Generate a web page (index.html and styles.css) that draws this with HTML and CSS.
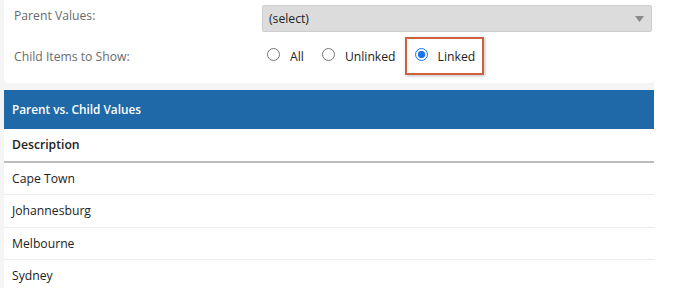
FILE: index.html
```html
<!DOCTYPE html>
<html>
<head>
<meta charset="utf-8">
<link rel="stylesheet" href="styles.css">
</head>
<body>
<div class="page">
  <div class="form">
    <div class="form-row row-select">
      <div class="label">Parent Values:</div>
      <div class="select">
        <span class="select-text">(select)</span>
        <svg class="caret" width="9" height="6" viewBox="0 0 9 6"><path d="M0 0H9L4.5 6Z" fill="#8a8a8a"/></svg>
      </div>
    </div>
    <div class="form-row row-radios">
      <div class="label">Child Items to Show:</div>
      <div class="radios">
        <label class="radio"><span class="circle"></span><span class="rtext">All</span></label>
        <label class="radio"><span class="circle"></span><span class="rtext">Unlinked</span></label>
        <label class="radio highlight"><span class="circle checked"></span><span class="rtext">Linked</span></label>
      </div>
    </div>
  </div>
  <div class="grid">
    <div class="grid-title">Parent vs. Child Values</div>
    <div class="grid-head">Description</div>
    <div class="grid-row">Cape Town</div>
    <div class="grid-row">Johannesburg</div>
    <div class="grid-row">Melbourne</div>
    <div class="grid-row">Sydney</div>
  </div>
</div>
</body>
</html>
```

FILE: styles.css
```css
html, body {
  margin: 0;
  padding: 0;
  background: #ffffff;
  font-family: "Open Sans", "Noto Sans", sans-serif;
  font-size: 12.2px;
  color: #333;
}
.page {
  width: 650px;
  padding-left: 4px;
  background: #f5f5f5;
  height: 288px;
  overflow: hidden;
}
.form {
  background: #fff;
  height: 83px;
  border-radius: 0 0 4px 4px;
  padding-left: 10px;
  padding-right: 2px;
  box-sizing: border-box;
  padding-top: 5px;
}
.form-row {
  display: flex;
  align-items: center;
}
.label {
  width: 248px;
  color: #6b6b6b;
  flex: none;
}
.row-select .label {
  align-self: flex-start;
  padding-top: 2px;
}
.select {
  flex: 1;
  height: 27px;
  box-sizing: border-box;
  background: #dcdcdc;
  border: 1px solid #cdcdcd;
  border-radius: 2px;
  display: flex;
  align-items: center;
  justify-content: space-between;
  padding: 0 7px 0 6px;
  color: #222;
}
.caret { margin-top: 1px; }
.row-radios {
  margin-top: 5px;
  height: 38px;
}
.radios {
  display: flex;
  align-items: center;
  height: 38px;
}
.radio {
  display: flex;
  align-items: center;
  color: #222;
}
.radio:first-child { margin-left: 5px; }
.radio + .radio { margin-left: 18px; }
.circle {
  width: 13px;
  height: 13px;
  border: 1px solid #767676;
  border-radius: 50%;
  box-sizing: border-box;
  margin-right: 10px;
  margin-top: -3px;
  flex: none;
}
.circle.checked {
  border: 1px solid #1a73e8;
  background: radial-gradient(circle, #1a73e8 0 3.4px, #fff 3.9px);
}
.radio.highlight {
  margin-left: 9px;
  height: 38px;
  box-sizing: border-box;
  border: 2px solid #d0613f;
  padding: 0 7px 0 8px;
  box-shadow: 1px 1px 3px rgba(0,0,0,0.25);
}
.grid {
  margin-top: 7px;
  background: #fff;
}
.grid-title {
  background: #2069a8;
  color: #fff;
  font-weight: 600;
  height: 39px;
  line-height: 39px;
  padding-left: 8px;
  font-size: 11.8px;
}
.grid-head {
  height: 32px;
  line-height: 32px;
  padding-left: 8px;
  font-weight: 600;
  color: #222;
  border-bottom: 2px solid #bdbdbd;
}
.grid-row {
  height: 31.4px;
  line-height: 32px;
  padding-left: 8px;
  color: #222;
  border-bottom: 1px solid #ececec;
}
```
